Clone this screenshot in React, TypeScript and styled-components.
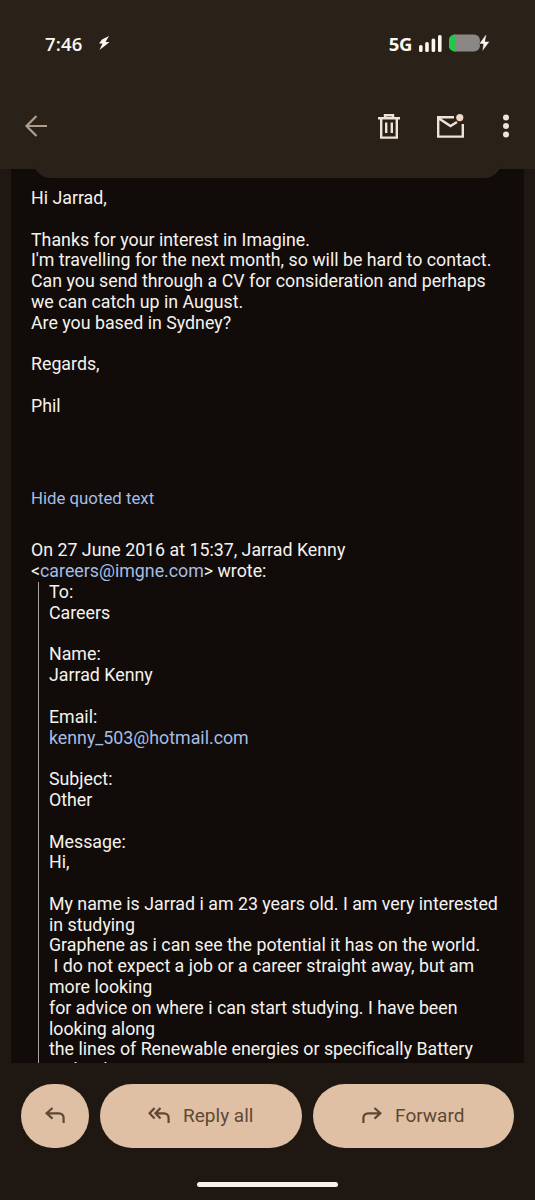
import React from 'react';
import styled, { createGlobalStyle } from 'styled-components';

const GlobalStyle = createGlobalStyle`
    html, body {
        margin: 0;
        padding: 0;
        background: #1f1712;
    }
    * {
        box-sizing: border-box;
    }
`;

const Page = styled.div`
    width: 535px;
    height: 1200px;
    display: flex;
    flex-direction: column;
    overflow: hidden;
    background: #1f1712;
    font-family: Roboto, "Liberation Sans", sans-serif;
`;

const Header = styled.header`
    height: 169px;
    flex: none;
    background: #2a2119;
    position: relative;
    z-index: 1;

    &::after {
        content: '';
        position: absolute;
        left: 33px;
        right: 33px;
        top: 159px;
        height: 19px;
        background: #2a2119;
        border-radius: 0 0 18px 18px;
    }
`;

const StatusBar = styled.div`
    height: 94px;
    padding: 31px 45px 0 45px;
    display: flex;
    align-items: flex-start;
    justify-content: space-between;
    color: #fbf7f2;
`;

const StatusGroup = styled.div`
    display: flex;
    align-items: center;
    height: 24px;
    gap: ${(props: { $gap: number }) => props.$gap}px;
`;

const Clock = styled.span`
    font-family: "Open Sans", Roboto, sans-serif;
    font-size: 18.5px;
    font-weight: 600;
    letter-spacing: 0.2px;
`;

const Network = styled.span`
    font-family: "Open Sans", Roboto, sans-serif;
    font-size: 18.5px;
    font-weight: 700;
    letter-spacing: -0.4px;
`;

const Toolbar = styled.div`
    height: 64px;
    padding: 0 25px 0 24px;
    display: flex;
    align-items: center;
    justify-content: space-between;
`;

const ToolActions = styled.div`
    display: flex;
    align-items: center;
    gap: 37px;
`;

const Main = styled.main`
    flex: 1;
    min-height: 0;
    margin: 0 11px;
    padding: 19px 20px 0;
    background: #110c09;
    color: #f6f2ee;
    font-size: 17.8px;
    line-height: 20.8px;
    overflow: hidden;
`;

const Para = styled.p`
    margin: 0 0 ${(props: { $after?: number }) => props.$after ?? 20.8}px;
`;

const Link = styled.span`
    color: #a6bde4;
`;

const ToggleLink = styled(Link)`
    font-size: 16.8px;
`;

const Quote = styled.div`
    margin-left: 7px;
    padding-left: 10px;
    border-left: 1px solid #a8a4a0;
`;

const BottomBar = styled.footer`
    flex: none;
    height: 137px;
    padding: 21px 21px 0;
    display: flex;
    flex-direction: column;
    align-items: center;
`;

const Actions = styled.div`
    width: 100%;
    display: grid;
    grid-template-columns: 68px 1fr 1fr;
    gap: 11px;
`;

const ActionButton = styled.button`
    height: 64px;
    border: 0;
    border-radius: 32px;
    background: #dfc0a4;
    color: #5f4833;
    font-family: inherit;
    font-size: 19px;
    font-weight: 400;
    padding: 0 0 2px;
    display: flex;
    align-items: center;
    justify-content: center;
    gap: 13px;
`;

const HomeBar = styled.div`
    width: 141px;
    height: 5px;
    margin-top: 34px;
    border-radius: 3px;
    background: #f5f2ef;
`;

const BoltIcon = () => (
    <svg width="12" height="14" viewBox="0 0 12 14" fill="#fbf7f2">
        <path d="M11 0 4 3.5 1 7.5h3.5L1.5 14l7-5.5 3-2.5h-4z" />
    </svg>
);

const SignalIcon = () => (
    <svg width="23" height="17" viewBox="0 0 23 17" fill="#fbf7f2">
        <rect x="0" y="10" width="3.6" height="7" rx="1.6" />
        <rect x="6.2" y="7" width="3.6" height="10" rx="1.6" />
        <rect x="12.6" y="3.5" width="3.6" height="13.5" rx="1.6" />
        <rect x="19" y="0" width="3.6" height="17" rx="1.6" />
    </svg>
);

const BatteryIcon = () => (
    <svg width="41" height="18" viewBox="0 0 41 18">
        <rect x="0" y="0.5" width="31" height="17" rx="6" fill="#8a8784" />
        <path d="M6 0.5h0.5v17H6a6 6 0 0 1-6-6v-5a6 6 0 0 1 6-6z" fill="#22c84a" />
        <path d="M36.5 1 30 10h4.2l-1 7.5 7.5-10h-4.6l1.4-6.5z" fill="#fbf7f2" stroke="#2a2119" strokeWidth="0.5" />
    </svg>
);

const BackIcon = () => (
    <svg width="24" height="24" viewBox="0 0 24 24" fill="none" stroke="#b09d8b" strokeWidth="2.2">
        <path d="M23 12H2.5M12.5 2 2.5 12l10 10" />
    </svg>
);

const TrashIcon = () => (
    <svg width="22" height="25" viewBox="0 0 22 25" fill="none" stroke="#f0e2d5" strokeWidth="2.4">
        <path d="M0 4.2h22M7 4V1.2h8V4M3.2 4.2v19.4h15.6V4.2M8.2 8.5v10.5M13.8 8.5v10.5" />
    </svg>
);

const MailIcon = () => (
    <svg width="28" height="24" viewBox="0 0 28 24" fill="none" stroke="#f0e2d5" strokeWidth="2.4">
        <path d="M17 3.2H1.2v19.4h24.6V10M1.6 4.2 13.5 12l6.5-4" />
        <circle cx="22.8" cy="3.6" r="3.6" fill="#f0d8c4" stroke="none" />
    </svg>
);

const DotsIcon = () => (
    <svg width="8" height="24" viewBox="0 0 8 24" fill="#f0e2d5">
        <circle cx="4" cy="3.6" r="3" />
        <circle cx="4" cy="12" r="3" />
        <circle cx="4" cy="20.4" r="3" />
    </svg>
);

const ReplyIcon = () => (
    <svg width="20" height="16" viewBox="0 0 20 16" fill="none" stroke="#5f4833" strokeWidth="2.2">
        <path d="M7.5 1 1.6 6.3l5.9 5.3M1.6 6.3H14a4.6 4.6 0 0 1 4.6 4.6V16" />
    </svg>
);

const ReplyAllIcon = () => (
    <svg width="22" height="16" viewBox="0 0 22 16" fill="none" stroke="#5f4833" strokeWidth="2.2">
        <path d="M6.6 1 1.6 6.3l5 5.3M12.5 1 7.4 6.3l5.1 5.3M7.4 6.3H16a4.6 4.6 0 0 1 4.6 4.6V16" />
    </svg>
);

const ForwardIcon = () => (
    <svg width="20" height="16" viewBox="0 0 20 16" fill="none" stroke="#5f4833" strokeWidth="2.2">
        <path d="M12.5 1l5.9 5.3-5.9 5.3M18.4 6.3H6a4.6 4.6 0 0 0-4.6 4.6V16" />
    </svg>
);

export default function App() {
    return (
        <Page>
            <GlobalStyle />
            <Header>
                <StatusBar>
                    <StatusGroup $gap={15}>
                        <Clock>7:46</Clock>
                        <BoltIcon />
                    </StatusGroup>
                    <StatusGroup $gap={7}>
                        <Network>5G</Network>
                        <SignalIcon />
                        <BatteryIcon />
                    </StatusGroup>
                </StatusBar>
                <Toolbar>
                    <BackIcon />
                    <ToolActions>
                        <TrashIcon />
                        <MailIcon />
                        <DotsIcon />
                    </ToolActions>
                </Toolbar>
            </Header>
            <Main>
                <Para>Hi Jarrad,</Para>
                <Para>
                    Thanks for your interest in Imagine.<br />
                    I'm travelling for the next month, so will be hard to contact.<br />
                    Can you send through a CV for consideration and perhaps<br />
                    we can catch up in August.<br />
                    Are you based in Sydney?
                </Para>
                <Para>Regards,</Para>
                <Para $after={71.6}>Phil</Para>
                <Para $after={31.2}><ToggleLink>Hide quoted text</ToggleLink></Para>
                <Para $after={0}>
                    On 27 June 2016 at 15:37, Jarrad Kenny<br />
                    &lt;<Link>careers@imgne.com</Link>&gt; wrote:
                </Para>
                <Quote>
                    <Para>To:<br />Careers</Para>
                    <Para>Name:<br />Jarrad Kenny</Para>
                    <Para>Email:<br /><Link>kenny_503@hotmail.com</Link></Para>
                    <Para>Subject:<br />Other</Para>
                    <Para>Message:<br />Hi,</Para>
                    <Para>
                        My name is Jarrad i am 23 years old. I am very interested<br />
                        in studying<br />
                        Graphene as i can see the potential it has on the world.<br />
                        &nbsp;I do not expect a job or a career straight away, but am<br />
                        more looking<br />
                        for advice on where i can start studying. I have been<br />
                        looking along<br />
                        the lines of Renewable energies or specifically Battery<br />
                        technology.
                    </Para>
                </Quote>
            </Main>
            <BottomBar>
                <Actions>
                    <ActionButton aria-label="Reply"><ReplyIcon /></ActionButton>
                    <ActionButton><ReplyAllIcon />Reply all</ActionButton>
                    <ActionButton><ForwardIcon />Forward</ActionButton>
                </Actions>
                <HomeBar />
            </BottomBar>
        </Page>
    );
}
